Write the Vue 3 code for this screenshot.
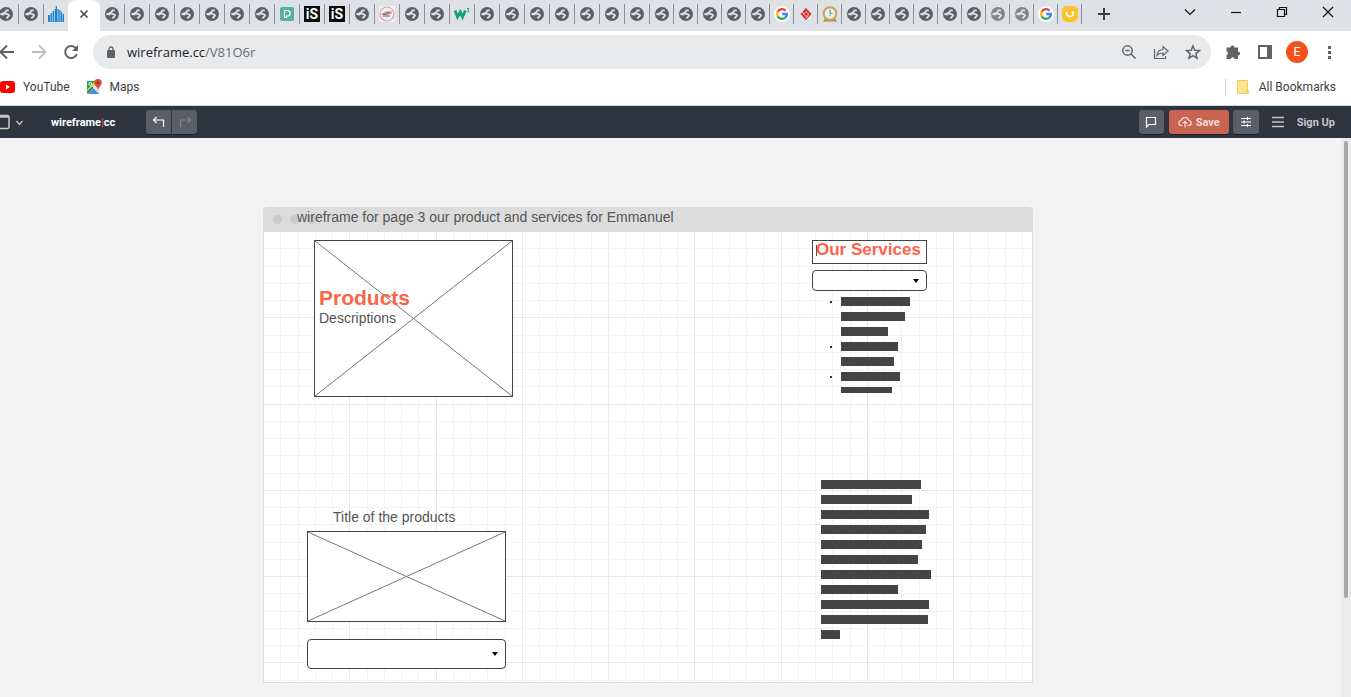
<script setup>
const globes = (n) => Array(n).fill('globe')
const wideTabs = [
  ...globes(7), 'pp', 'is', 'is', 'globe', 'seal', ...globes(2), 'w3', ...globes(8),
]
const narrowTabs = [
  ...globes(4), 'google', 'diamond', 'clock', ...globes(6), 'dim', 'dim', 'google', 'smile',
]
const tabs = [
  ...wideTabs.map((kind, i) => ({ kind, narrow: i === wideTabs.length - 1 })),
  ...narrowTabs.map((kind) => ({ kind, narrow: true })),
]

// Five minor cells make one major cell of the drawing grid
const gridLines = (count, offset) =>
  Array.from({ length: count }, (_, i) => ({
    at: Math.round(((i + 1) * 69) / 4) + offset,
    major: (i + 1) % 5 === 0,
  }))
const columns = gridLines(44, 0)
const rows = gridLines(26, 0)

const listBars = [
  { width: 69, dot: true },
  { width: 64 },
  { width: 47 },
  { width: 57, dot: true },
  { width: 53 },
  { width: 59, dot: true },
  { width: 51, cut: true },
]
const paragraphBars = [100, 91, 108, 105, 101, 97, 110, 77, 108, 107, 19]
</script>

<template>
  <div class="window">
    <svg class="defs" aria-hidden="true">
      <symbol id="globe" viewBox="0 0 16 16">
        <circle cx="8" cy="8" r="7" fill="currentColor" />
        <path d="M10.800 4.300H8.500L7.300 6.200 5.600 7.200 9.500 8.200l1.600 1-1 1.600-1.800 1.400" fill="none" stroke="#dee1e6" stroke-width="1.800" stroke-linejoin="round" />
        <path d="M2.300 7.300l3.500-.7 1 1.800-1.300 1.200-3-.6z" fill="#dee1e6" />
      </symbol>
      <symbol id="google" viewBox="0 0 16 16">
        <circle cx="8" cy="8" r="8" fill="#fff" />
        <g fill="none" stroke-width="2.400">
          <path d="M11.600 4.700A4.900 4.900 0 0 0 3.700 5.700" stroke="#ea4335" />
          <path d="M3.700 5.700a4.900 4.900 0 0 0 0 4.600" stroke="#fbbc05" />
          <path d="M3.700 10.300a4.900 4.900 0 0 0 7.500 1.400" stroke="#34a853" />
          <path d="M11.200 11.700A4.900 4.900 0 0 0 12.900 8H8.200" stroke="#4285f4" />
        </g>
      </symbol>
    </svg>

    <header class="tab-strip">
      <div class="tabs">
        <button class="tab" aria-label="Tab"><svg class="fav"><use href="#globe" /></svg></button>
        <button class="tab" aria-label="Tab"><svg class="fav"><use href="#globe" /></svg></button>
        <button class="tab before-active" aria-label="Tab">
          <svg class="fav" viewBox="0 0 16 16"><path d="M0 9h2v7H0zM2.500 7h1.500v9H2.500zM4.600 5h1.500v11H4.600zM6.700 3h1v13h-1zM7.700 0h1.300v16H7.700zM9.400 3h1.300v13H9.400zM11.200 4h1.300v12h-1.300zM12.900 6h1.200v10h-1.200zM14.500 8H16v8h-1.500z" fill="#2383cf" /></svg>
        </button>
        <button class="tab-active" aria-label="Close tab">
          <svg width="10" height="10" viewBox="0 0 10 10"><path d="M1.500 1.500l7 7M8.500 1.500l-7 7" stroke="#45484c" stroke-width="1.600" /></svg>
        </button>
        <button v-for="(tab, i) in tabs" :key="i" class="tab" :class="{ narrow: tab.narrow }" aria-label="Tab">
          <svg v-if="tab.kind === 'globe'" class="fav"><use href="#globe" /></svg>
          <svg v-else-if="tab.kind === 'dim'" class="fav dim"><use href="#globe" /></svg>
          <svg v-else-if="tab.kind === 'google'" class="fav"><use href="#google" /></svg>
          <svg v-else-if="tab.kind === 'pp'" class="fav" viewBox="0 0 16 16">
            <rect x="1" y="1" width="14" height="14" rx="2" fill="#55b0a0" />
            <path d="M5.500 11.500v-7h4l1.500 1.500v2.500L9.500 10h-2v1.500z" fill="none" stroke="#fff" stroke-width="1.200" />
          </svg>
          <span v-else-if="tab.kind === 'is'" class="fav is">iS</span>
          <svg v-else-if="tab.kind === 'seal'" class="fav" viewBox="0 0 16 16">
            <rect width="16" height="16" fill="#f1eeee" />
            <circle cx="8" cy="8" r="7" fill="none" stroke="#dfa3a3" stroke-width="1.200" />
            <path d="M3 7.500l5-2h4.500v2.300H7z" fill="#da7272" /><path d="M3 8.300h5l2-1.300M4 10h7" stroke="#4f6781" fill="none" />
          </svg>
          <svg v-else-if="tab.kind === 'w3'" class="fav" viewBox="0 0 16 16">
            <path d="M1 4.500l2.500 6.500L6.300 6l2.200 5 2.800-6.500" fill="none" stroke="#12a06c" stroke-width="2.700" />
            <path d="M13 2.500h2l-1.200 1.800c1.600 0 1.400 2.300-.8 1.800" fill="none" stroke="#12a06c" stroke-width=".9" />
          </svg>
          <svg v-else-if="tab.kind === 'diamond'" class="fav" viewBox="0 0 16 16">
            <path d="M8 2l5.500 6L8 14 2.500 8z" fill="#d6302f" />
            <path d="M8 5.500L10.500 8 8 10.500 5.500 8zM4 6l2 2M8 12l2.500-2.500" fill="none" stroke="#f2c3c4" />
            <path d="M8 6.500L9.500 8 8 9.500 6.500 8z" fill="#d6302f" />
          </svg>
          <svg v-else-if="tab.kind === 'clock'" class="fav" viewBox="0 0 16 16">
            <path d="M3 12h10l2 3.500H1z" fill="#b08f42" />
            <circle cx="8" cy="7.500" r="6.300" fill="#e8eff1" stroke="#c9a54d" stroke-width="2" />
            <path d="M8 3.500V7l2.500 1" stroke="#547d8e" fill="none" /><path d="M8 8.500v1.600" stroke="#3cae6b" />
          </svg>
          <svg v-else class="fav" viewBox="0 0 16 16">
            <rect width="16" height="16" rx="5" fill="#fdc02f" />
            <path d="M4.500 6c0 6 7 6 7 0M9.500 6h2" fill="none" stroke="#fff" stroke-width="1.700" />
          </svg>
        </button>
        <button class="new-tab" aria-label="New tab">
          <svg width="12" height="12" viewBox="0 0 12 12"><path d="M6 0v12M0 6h12" stroke="#3c4043" stroke-width="2" /></svg>
        </button>
      </div>
      <div class="controls">
        <button aria-label="Search tabs"><svg width="12" height="12" viewBox="0 0 12 12"><path d="M1 3.500l5 5 5-5" /></svg></button>
        <button aria-label="Minimize"><svg width="12" height="12" viewBox="0 0 12 12"><path d="M1 6.500h10" /></svg></button>
        <button aria-label="Restore"><svg width="12" height="12" viewBox="0 0 12 12"><path d="M1.500 3.500h7v7h-7zM3.500 3.500v-2h7v7h-2" /></svg></button>
        <button aria-label="Close"><svg width="12" height="12" viewBox="0 0 12 12"><path d="M1 1l10 10M11 1L1 11" /></svg></button>
      </div>
    </header>

    <nav class="toolbar" aria-label="Navigation">
      <div class="nav-buttons">
        <button class="icon-btn" aria-label="Back"><svg viewBox="0 0 16 16"><path d="M15 8H2M8 1.500L1.500 8 8 14.500" stroke-width="2" /></svg></button>
        <button class="icon-btn disabled" aria-label="Forward"><svg viewBox="0 0 16 16"><path d="M1 8h13M8 1.500L14.500 8 8 14.500" stroke-width="2" /></svg></button>
        <button class="icon-btn" aria-label="Reload"><svg viewBox="0 0 16 16"><path d="M13.800 10A6 6 0 1 1 12.400 3.800L14 5.500" stroke-width="2" /><path d="M15 1v6H9z" fill="currentColor" stroke="none" /></svg></button>
      </div>
      <div class="address">
        <svg class="lock" width="8" height="12" viewBox="0 0 8 12"><rect y="4" width="8" height="8" rx="1" fill="#5f6368" /><path d="M2 4.500V3a2 2 0 0 1 4 0v1.500" fill="none" stroke="#5f6368" stroke-width="1.300" /></svg>
        <a class="url" href="#">wireframe.cc<span>/V81O6r</span></a>
        <div class="address-actions">
          <button class="icon-btn" aria-label="Zoom"><svg viewBox="0 0 16 16"><circle cx="6.500" cy="6.500" r="4.700" stroke-width="1.500" /><path d="M10 10l4.500 4.500M4.500 6.500h4" stroke-width="1.500" /></svg></button>
          <button class="icon-btn" aria-label="Share"><svg viewBox="0 0 16 16"><path d="M1.500 5v9.500h11V12M4 11.500c.3-4 2.500-5.800 6-6V2.500L15 7l-5 4.500V9c-3 0-4.800.8-6 2.500z" stroke-width="1.200" /></svg></button>
          <button class="icon-btn" aria-label="Bookmark"><svg viewBox="0 0 16 16"><path d="M8 2l1.800 4.200 4.600.4-3.500 3 1.100 4.500L8 11.700l-4 2.400 1.100-4.500-3.500-3 4.600-.4z" stroke-width="1.500" /></svg></button>
        </div>
      </div>
      <div class="nav-buttons end">
        <button class="icon-btn" aria-label="Extensions"><svg viewBox="0 0 16 16"><path d="M1.500 3.500h4a2 2 0 0 1 4 0h3.500v4a2 2 0 0 1 0 4v3.500H9.500a1.800 1.800 0 0 0-3.600 0H1.500v-4a1.900 1.900 0 0 0 0-3.700z" fill="currentColor" stroke="none" /></svg></button>
        <button class="icon-btn" aria-label="Side panel"><svg viewBox="0 0 16 16"><path d="M2 2h12v12H2z" stroke-width="2" /><path d="M10 2h4v12h-4z" fill="currentColor" stroke="none" /></svg></button>
        <button class="icon-btn" aria-label="Profile"><span class="avatar">E</span></button>
        <button class="icon-btn" aria-label="Menu"><svg viewBox="0 0 16 16"><path d="M7 2h3v3H7zM7 7h3v3H7zM7 12h3v3H7z" fill="currentColor" stroke="none" /></svg></button>
      </div>
    </nav>

    <nav class="bookmarks" aria-label="Bookmarks">
      <a href="#">
        <svg width="15" height="12" viewBox="0 0 15 12"><rect width="15" height="12" rx="3" fill="#f00" /><path d="M6 3.500L10 6l-4 2.500z" fill="#fff" /></svg>
        YouTube
      </a>
      <a href="#">
        <svg width="15" height="16" viewBox="0 0 15 16">
          <rect y="2" width="13" height="13" rx="1" fill="#e2e3e3" /><path d="M0 2h9L0 12z" fill="#1aa260" />
          <path d="M6.500 9.500L12 15H1z" fill="#4285f4" /><path d="M0 11l7-8 2 2-9 9z" fill="#f7d34a" /><path d="M0 12.500l5-5 1.500 1.500-6 6z" fill="#278a58" />
          <circle cx="3.300" cy="4.800" r="1.400" fill="none" stroke="#fff" />
          <path d="M11 0a3.800 3.800 0 0 1 3.800 3.800c0 2.500-2.700 3.700-3.800 7-1.100-3.300-3.800-4.500-3.800-7A3.800 3.800 0 0 1 11 0z" fill="#dd4b3e" /><circle cx="11" cy="3.700" r="1.300" fill="#872d25" />
        </svg>
        Maps
      </a>
      <a href="#" class="all">
        <svg width="12" height="14" viewBox="0 0 12 14"><path d="M.5.5h10v11h1v2H.5z" fill="#ffe591" stroke="#efcd59" /><path d="M9.500 13v-3h2" fill="none" stroke="#efcd59" /></svg>
        All Bookmarks
      </a>
    </nav>

    <header class="appbar">
      <button class="stencil" aria-label="Change window">
        <svg width="24" height="16" viewBox="0 0 24 16" fill="none"><path d="M0 1.500h7a2 2 0 0 1 2 2v9a2 2 0 0 1-2 2H0M0 3h9" stroke="#c9cacd" stroke-width="1.500" /><path d="M16.500 7l3 3.500L22.500 7" stroke="#c9cacd" stroke-width="1.200" /></svg>
      </button>
      <a class="logo" href="#">wireframe<i>|</i>cc</a>
      <div class="history">
        <button class="tool" aria-label="Undo"><svg viewBox="0 0 14 14"><path d="M4.500 2L1.500 5l3 3M1.500 5h10v7" /></svg></button>
        <button class="tool faded" aria-label="Redo"><svg viewBox="0 0 14 14"><path d="M9.500 2l3 3-3 3M12.500 5h-10v7" /></svg></button>
      </div>
      <div class="actions">
        <button class="tool" aria-label="Comments"><svg viewBox="0 0 14 14"><path d="M2.500 2.500h9v7H5l-2.500 2.500z" /></svg></button>
        <button class="tool save"><svg viewBox="0 0 14 14"><path d="M4.500 10.500H3.500a2.500 2.500 0 0 1-.3-5 3.900 3.900 0 0 1 7.600 0 2.500 2.500 0 0 1-.3 5h-1M7 12.500V6.500M4.800 8.500L7 6.300l2.200 2.200" /></svg>Save</button>
        <button class="tool settings" aria-label="Settings"><svg viewBox="0 0 14 14"><path d="M2 3.500h10M2 7h10M2 10.500h10M8.500 2v3M5 5.500v3M8.500 9v3" /></svg></button>
        <button class="menu" aria-label="Menu"><svg width="12" height="12" viewBox="0 0 12 12"><path d="M0 1.500h12M0 6h12M0 10.500h12" stroke="#c4c5c9" stroke-width="1.300" /></svg></button>
        <a class="signup" href="#">Sign Up</a>
      </div>
    </header>

    <main class="workspace">
      <section class="frame" aria-label="Wireframe canvas">
        <div class="frame-head"><i></i><i></i><i></i></div>
        <div class="frame-body">
          <svg class="grid" aria-hidden="true">
            <rect v-for="c in columns" :key="'c' + c.at" :x="c.at - 1" y="0" width="1" height="100%" :class="{ major: c.major }" />
            <rect v-for="r in rows" :key="'r' + r.at" x="0" :y="r.at - 1" width="100%" height="1" :class="{ major: r.major }" />
          </svg>
        </div>

        <p class="item caption">wireframe for page 3 our product and services for Emmanuel</p>
        <svg class="item picture hero"><line x1="0" y1="0" x2="100%" y2="100%" /><line x1="100%" y1="0" x2="0" y2="100%" /></svg>
        <div class="item product">
          <h1>Products</h1>
          <p>Descriptions</p>
        </div>
        <p class="item title">Title of the products</p>
        <svg class="item picture thumb"><line x1="0" y1="0" x2="100%" y2="100%" /><line x1="100%" y1="0" x2="0" y2="100%" /></svg>
        <div class="item picker wide">
          <select aria-label="Product"></select>
          <svg width="6" height="4" viewBox="0 0 6 4"><path d="M0 0h6L3 4z" /></svg>
        </div>

        <h2 class="item services">Our Services</h2>
        <div class="item picker small">
          <select aria-label="Service"></select>
          <svg width="6" height="4" viewBox="0 0 6 4"><path d="M0 0h6L3 4z" /></svg>
        </div>
        <ul class="item list">
          <li v-for="(bar, i) in listBars" :key="i" :class="{ dot: bar.dot, cut: bar.cut }">
            <span :style="{ width: bar.width + 'px' }"></span>
          </li>
        </ul>
        <div class="item paragraph">
          <span v-for="(width, i) in paragraphBars" :key="i" :style="{ width: width + 'px' }"></span>
        </div>
      </section>
      <div class="scrollbar"><span></span></div>
    </main>
  </div>
</template>

<style>
body { margin: 0; overflow: hidden; }
</style>

<style scoped>
* { box-sizing: border-box; }
button { border: 0; padding: 0; margin: 0; background: none; font: inherit; color: inherit; }
a { color: inherit; text-decoration: none; }
h1, h2, p, ul { margin: 0; padding: 0; }
svg { display: block; flex: none; }

.window { display: flex; flex-direction: column; min-height: 100vh; overflow: hidden; background: #fff; font-family: "Open Sans", "Noto Sans", sans-serif; font-size: 12px; color: #3c4043; }
.defs { position: absolute; width: 0; height: 0; }

.tab-strip { display: flex; justify-content: space-between; height: 31px; background: #dee1e6; }
.tabs { display: flex; margin-left: -6px; }
.tab { display: flex; flex: none; width: 25px; height: 20px; margin-top: 4px; padding: 2px 4px; border-right: 1px solid #8d9094; }
.tab.narrow { width: 24px; }
.tab.before-active { width: 24px; border-right-color: transparent; }
.tab-active { display: flex; flex: none; align-items: center; justify-content: center; width: 32px; height: 31px; padding-bottom: 3px; background: #fff; border-radius: 8px 8px 0 0; }
.fav { flex: none; width: 16px; height: 16px; color: #5c6064; }
.fav.dim { color: #858585; }
.fav.is { background: #090d0c; color: #fff; font: 700 14px/16px Roboto, sans-serif; text-align: center; }
.new-tab { display: flex; align-items: center; justify-content: center; width: 44px; height: 28px; }
.controls { display: flex; flex: none; }
.controls button { display: flex; align-items: center; justify-content: center; width: 46px; height: 23px; }
.controls path { fill: none; stroke: #111; stroke-width: 1.2; }

.toolbar { display: flex; align-items: center; gap: 6px; height: 42px; padding: 0 6px 0 0; }
.nav-buttons { display: flex; margin-left: -9px; }
.nav-buttons.end { margin-left: 0; }
.icon-btn { display: flex; align-items: center; justify-content: center; width: 32px; height: 32px; color: #5f6368; }
.icon-btn svg { width: 16px; height: 16px; fill: none; stroke: currentColor; }
.icon-btn.disabled { color: #bcbec1; }
.address { display: flex; flex: 1; align-items: center; height: 34px; padding: 0 2px 0 14px; border-radius: 17px; background: #e9eaec; }
.url { margin-left: 12px; font-size: 13px; line-height: 20px; color: #202124; }
.url span { color: #6b6f73; }
.address-actions { display: flex; margin-left: auto; }
.avatar { width: 22px; height: 22px; border-radius: 50%; background: #f4511e; color: #fff; font: 12px/22px Roboto, sans-serif; text-align: center; }

.bookmarks { display: flex; align-items: center; gap: 17px; height: 33px; padding: 0 15px 5px 0; border-bottom: 1px solid #d5d7da; font-family: Roboto, sans-serif; }
.bookmarks a { display: flex; align-items: center; gap: 8px; line-height: 16px; }
.bookmarks .all { gap: 10px; margin-left: auto; padding-left: 11px; border-left: 1px solid #cfd1d4; }

.appbar { display: flex; align-items: center; height: 32px; padding-right: 16px; background: #2f3440; font-family: Roboto, sans-serif; font-size: 11px; font-weight: 700; }
.stencil { width: 24px; }
.logo { width: 95px; margin-left: 27px; color: #fff; }
.logo i { color: #e5533d; font-style: normal; }
.history, .actions { display: flex; align-items: center; }
.history { gap: 1px; }
.actions { margin-left: auto; }
.tool { display: flex; align-items: center; justify-content: center; gap: 4px; width: 25px; height: 24px; border-radius: 3px; background: #5a5e68; color: #fff; box-shadow: 0 1px 0 #1d2028; }
.tool svg { width: 14px; height: 14px; fill: none; stroke: currentColor; stroke-width: 1.2; }
.history .tool:first-child { border-radius: 3px 0 0 3px; }
.history .tool:last-child { border-radius: 0 3px 3px 0; }
.tool.faded { color: #7f828a; }
.tool.save { width: 60px; margin: 0 4px 0 5px; background: #c96452; color: #f3dfdb; }
.tool.settings { width: 26px; }
.menu { margin: 0 13px; }
.signup { color: #c4c5c9; }

.workspace { display: flex; flex: 1; justify-content: space-between; padding-left: 263px; background: #f4f4f4; font-family: "Liberation Sans", Arial, sans-serif; font-size: 14px; color: #555; }
.frame { position: relative; display: flex; flex-direction: column; flex: 0 1 770px; min-height: 476px; margin: 69px 0 14px; }
.frame-head { display: flex; align-items: center; gap: 8px; height: 25px; padding-left: 10px; border-radius: 4px 4px 0 0; background: #dcdcdc; }
.frame-head i { width: 9px; height: 9px; border-radius: 50%; background: #cacaca; }
.frame-body { flex: 1; border: 1px solid #dfdfdf; border-top: 0; background: #fff; overflow: hidden; }
.grid { width: 100%; height: 450px; fill: #f4f4f4; }
.grid .major { fill: #e8e8e8; }

.item { position: absolute; line-height: 16px; }
.caption { left: 34px; top: 2px; white-space: nowrap; }
.picture { border: 1px solid #444; background: #fff; stroke: #777; }
.hero { left: 51px; top: 33px; width: 199px; height: 157px; }
.product { left: 56px; top: 79px; }
.product h1 { font-size: 21px; line-height: 24px; color: #ff6347; }
.title { left: 70px; top: 302px; white-space: nowrap; }
.thumb { left: 44px; top: 324px; width: 199px; height: 91px; }
.picker { display: flex; align-items: center; border: 1px solid #444; border-radius: 4px; background: #fff; }
.picker select { flex: 1; align-self: stretch; min-width: 0; border: 0; background: none; appearance: none; }
.picker svg { margin-right: 7px; }
.picker.wide { left: 44px; top: 432px; width: 199px; height: 30px; }
.picker.small { left: 549px; top: 63px; width: 115px; height: 21px; }
.services { left: 549px; top: 33px; width: 115px; height: 24px; padding-left: 3px; border: 1px solid #444; background: #fff; font-size: 17px; line-height: 18px; color: #ff6347; white-space: nowrap; }
.services::before { content: ""; position: absolute; left: 3px; top: 4px; width: 1px; height: 11px; background: #555; }
.list { left: 567px; top: 90px; display: flex; flex-direction: column; gap: 6px; list-style: none; }
.list li { display: flex; align-items: center; height: 9px; padding-left: 11px; }
.list li.dot { padding-left: 0; }
.list li.dot::before { content: ""; width: 2px; height: 2px; margin-right: 9px; background: #333; }
.list li.cut { height: 6px; }
.list span { height: 100%; background: #444; }
.paragraph { left: 558px; top: 273px; display: flex; flex-direction: column; gap: 6px; }
.paragraph span { height: 9px; background: #444; }

.scrollbar { flex: none; width: 10px; padding: 3px 3px 0; background: #ececec; }
.scrollbar span { display: block; height: 457px; border-radius: 2px; background: #a8a8a8; }
</style>
